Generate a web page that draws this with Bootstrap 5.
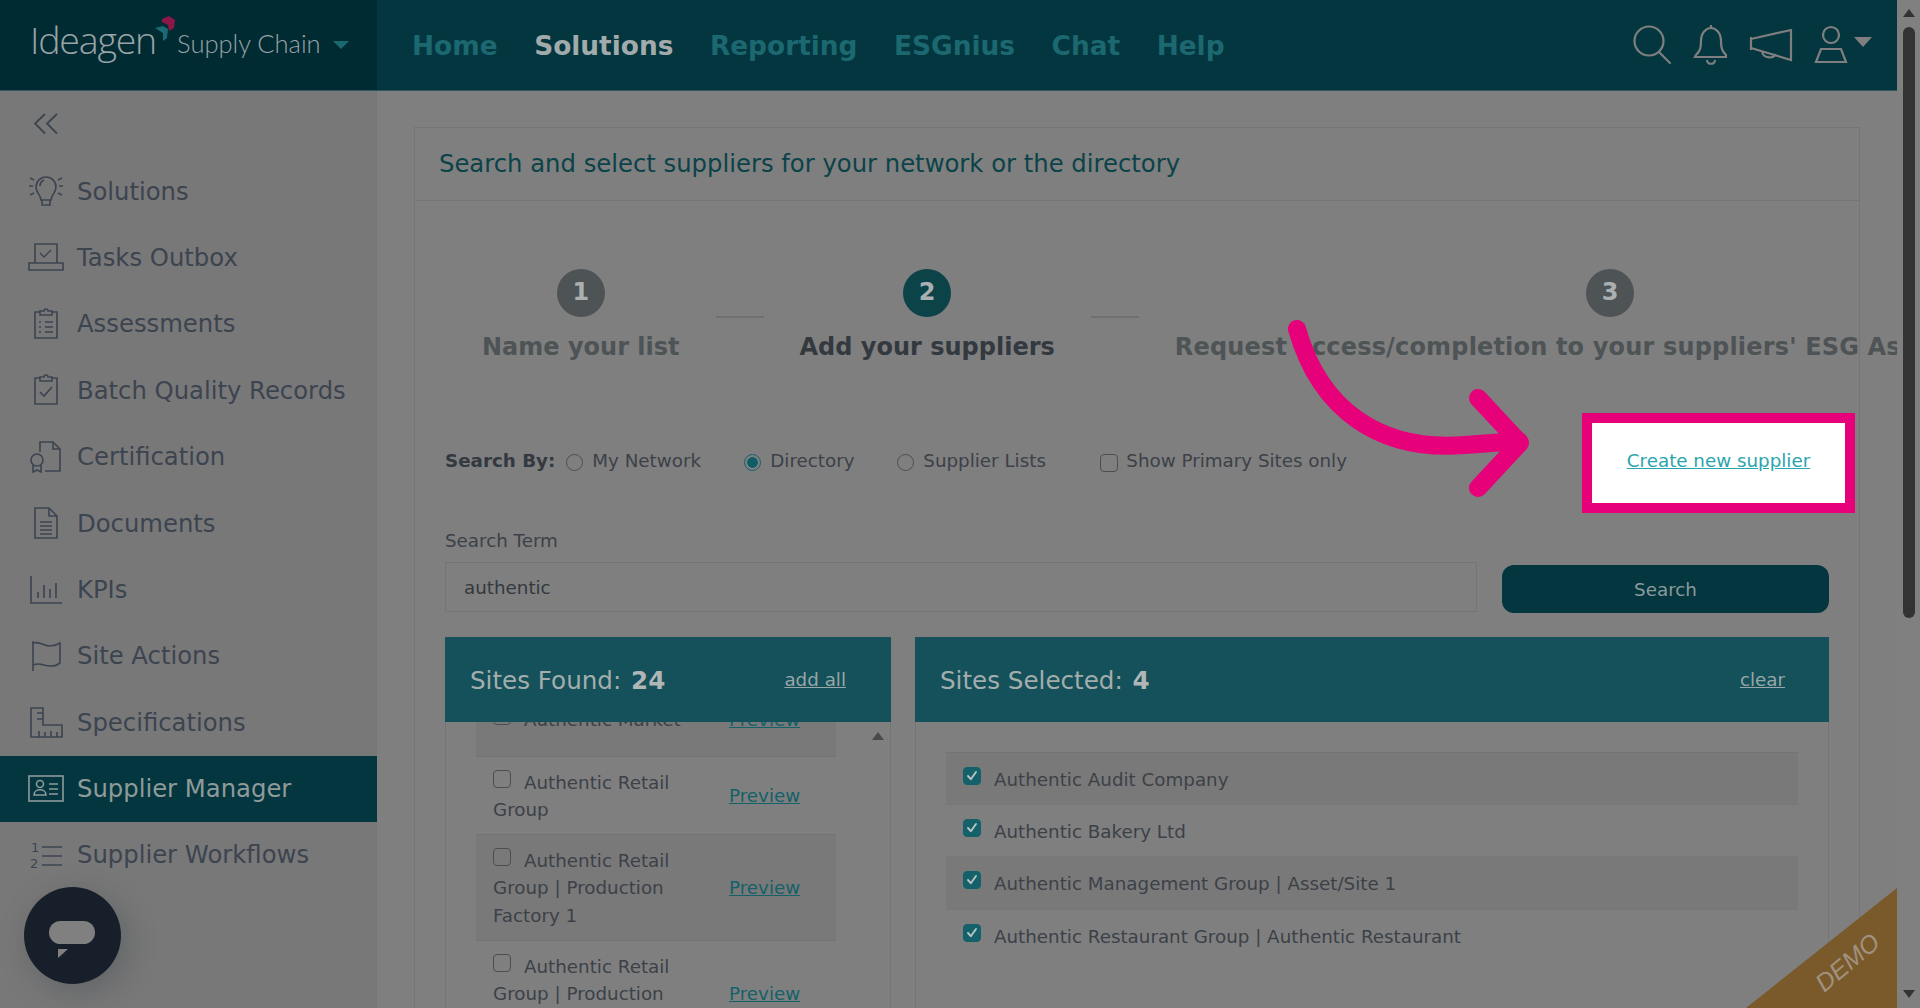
<!doctype html>
<html lang="en">
<head>
<meta charset="utf-8">
<title>Supplier Manager</title>
<link rel="stylesheet" href="https://cdn.jsdelivr.net/npm/bootstrap@5.3.0/dist/css/bootstrap.min.css">
<style>
html,body{height:100%;margin:0;overflow:hidden}
body{background:#7f7f7f;color:#3c4148;font-family:"DejaVu Sans",Verdana,sans-serif;font-size:18.3px;line-height:27.3px}
.scr-col{width:23px;flex:0 0 23px;background:#808080}
.scr-up,.scr-dn{width:0;height:0;border-left:6px solid transparent;border-right:6px solid transparent;margin:0 auto}
.scr-up{border-bottom:8px solid #333;margin-top:9px}
.scr-dn{border-top:8px solid #333;margin-top:auto;margin-bottom:10px}
.scr-thumb{width:12px;height:591px;background:#333;border-radius:6px;margin:10px auto 0}
.topbar{height:91px;background:#03363f;border-bottom:1px solid #2c5a60;padding:0;flex-wrap:nowrap;flex:0 0 91px}
.brandbox{width:377px;height:90px;background:#002b33;padding-left:30px;color:#9aa3a6;flex:0 0 377px}
.logo-word{font-family:"Open Sans",sans-serif;font-weight:300;font-size:37.5px;letter-spacing:-1.2px;line-height:1;margin-top:-11px}
.logo-sub{font-family:"Lato",sans-serif;font-weight:300;font-size:25.5px;line-height:1;margin-left:0;margin-top:-2px}
.brand-caret{width:0;height:0;border-left:8px solid transparent;border-right:8px solid transparent;border-top:8px solid #1b6870;margin:0 0 0 12px}
.topnav{gap:36.5px;padding-left:35px}
.topnav a{font-size:26.4px;font-weight:700;color:#1b6870;text-decoration:none;line-height:1.2;margin-top:2px}
.topnav a.on{color:#a2abab}
.top-ico{padding-right:25px;gap:0}
.side{width:377px;flex:0 0 377px;background:#787878}
.side-collapse{height:67px;padding:18px 0 0 34px}
.side-row{height:66.4px;padding-left:27px;gap:12px;color:#3c4450;font-size:24.3px;text-decoration:none}
.side-row.on{background:#03363f;color:#8f9a9a}
.side-row svg{flex:0 0 38px}
.pane{padding:36px 37px 0 37px;min-width:0}
.sheet{background:#7f7f7f;border:1px solid #757575;border-bottom:0;--bs-card-bg:#7f7f7f;--bs-card-border-radius:0;--bs-card-inner-border-radius:0;border-radius:0;height:1200px}
.sheet-head{height:73px;padding:0 24px;border-bottom:1px solid #757575;background:transparent;color:#0b4349;font-size:24.3px}
.sheet-body{padding:68px 30px 0 30px}
.stepper{margin-left:37px;gap:36px;white-space:nowrap}
.step-num{width:48px;height:48px;border-radius:50%;background:#4e5356;color:#aab0b2;font-weight:700;font-size:24px;margin:0 auto 15px}
.step-one.cur .step-num{background:#0b4349}
.step-lab{font-size:24px;font-weight:700;color:#4e5356;line-height:30px}
.step-lab.long-lab{letter-spacing:.17px}
.step-one.cur .step-lab{color:#33393f}
.step-bar{width:48px;height:2px;background:#6f7171;margin-top:47px;flex:0 0 48px}
.opts{margin-top:51px;height:100px;margin-right:-26px}
.opts b{color:#33393f;margin-right:11px;margin-top:-5px}
.opts label span{margin-top:-5px}
.form-check-input.tick{width:18px;height:18px;flex:none;background-color:transparent;border:1.5px solid #4a4e52;margin:0;border-radius:4px}
.form-check-input.rad{width:17px;height:17px;flex:none;background-color:transparent;border:1.5px solid #4a4e52;margin:0 9px 0 0}
.form-check-input.rad:checked{border-color:#14616a;background-color:transparent;background-image:radial-gradient(circle,#0e5d66 0 5px,transparent 5.6px)}
.form-check-input.tick:checked{background-color:#14616a;border-color:#14616a;background-image:url("data:image/svg+xml,%3csvg xmlns='http://www.w3.org/2000/svg' viewBox='0 0 20 20'%3e%3cpath fill='none' stroke='%23b9c4c4' stroke-linecap='round' stroke-linejoin='round' stroke-width='2.4' d='m5 10 3.5 4L15 5'/%3e%3c/svg%3e")}
.hl-box{width:273px;height:100px;border:10px solid #e6007a;background:#fff}
.hl-box a{color:#2aa5ae;text-decoration:underline;margin-top:-5px}
.term-lab{margin-top:14px;margin-bottom:8px;color:#3c4148}
.term-row{gap:25px}
.term-in{flex:0 0 1032px;width:1032px;height:50px;background:#7f7f7f;border:1px solid #757575;border-radius:0;color:#33393f;font-size:18.3px;padding:0 18px;font-family:inherit}
.term-in:focus{background:#7f7f7f;box-shadow:none;border-color:#757575;color:#33393f}
.go-btn{flex:1;height:48px;background:#03363f;border:0;border-radius:12px;color:#8a9a9a;font-size:18.3px;font-family:inherit;margin-bottom:-1px}
.panels{gap:24px;margin-top:25px}
.pan-l{flex:0 0 446px;width:446px}
.pan-r{flex:1;min-width:0}
.pan-h{height:85px;background:#14515a;color:#a4adad;font-size:24.6px;padding:0 25px}
.pan-h > span{margin-top:2px}
.pan-l .pan-h{padding-right:45px}
.pan-r .pan-h{padding-right:44px}
.pan-h b{font-weight:700;color:#b0b5b5;margin-left:2px}
.pan-h a{color:#97a6a6;font-size:18.3px;text-decoration:underline}
.pan-b{height:400px;border:solid #757575;border-width:0 1px;overflow:hidden;position:relative}
.list-l{margin:-28px 0 0 30px;width:360px}
.l-row{border-bottom:1px solid #747474;padding:12px 0 11px 17px}
.l-row:nth-child(odd){background:#797979}
.l-row.clip-row{padding-bottom:22px}
.l-name{flex:0 0 236px;width:236px;padding-right:30px}
.l-name .tick{vertical-align:top;margin:1px 13px 0 0!important}
.l-row a,.r-row a{color:#14616a}
.up-tri{position:absolute;right:6px;top:10px;width:0;height:0;border-left:6px solid transparent;border-right:6px solid transparent;border-bottom:8px solid #4a4a4a}
.list-r{padding:30px 30px 0 30px}
.r-row{padding:12.8px 17px;border-bottom:1px solid #777;gap:13px;height:52.6px}
.r-row:first-child{border-top:1px solid #747474}
.r-row:nth-child(odd){background:#797979}
.r-row:last-child{border-bottom:0}
.r-row .tick{margin-top:1px!important}
.ovr{position:absolute;pointer-events:none}
.arrow-ovr{left:0;top:0}
.demo-ovr{right:0;bottom:0;width:151px;height:120px;background:#7a5a2a;clip-path:polygon(100% 0,100% 100%,0 100%)}
.demo-t{position:absolute;right:12px;bottom:33px;transform:rotate(-40deg);font-family:"Liberation Sans",sans-serif;font-style:italic;font-size:25px;line-height:1;color:#a09180}
.chat-fab{left:24px;top:887px;width:97px;height:97px;border-radius:50%;background:#17202a;box-shadow:6px 8px 30px rgba(30,40,50,.25)}
</style>
</head>
<body>
<div class="d-flex h-100">
<div class="flex-grow-1 d-flex flex-column position-relative overflow-hidden" style="min-width:0">
  <nav class="navbar topbar d-flex align-items-stretch justify-content-start">
    <div class="brandbox d-flex align-items-center position-relative">
      <span class="logo-word">Ideagen</span>
      <svg width="24" height="34" viewBox="0 0 24 34" class="flex-shrink-0" style="margin:-28px 0 0 -3px"><path d="M9 5l7-3 6 4-1 8-5 3-1-6-6-3z" fill="#8a1748"/><path d="M2 14l8-2 5 3-1 9-4 3V19z" fill="#1a6a74"/></svg>
      <span class="logo-sub">Supply Chain</span>
      <span class="brand-caret"></span>
    </div>
    <div class="topnav d-flex align-items-center flex-grow-1">
      <a href="#">Home</a><a href="#" class="on">Solutions</a><a href="#">Reporting</a><a href="#">ESGnius</a><a href="#">Chat</a><a href="#">Help</a>
    </div>
    <div class="top-ico d-flex align-items-center">
      <svg width="40" height="40" viewBox="0 0 40 40" fill="none" stroke="#7f7f7f" stroke-width="2.2" style="margin-right:21px"><circle cx="17" cy="16" r="14.5"/><path d="M27 27l11 11" stroke-linecap="round"/></svg>
      <svg width="36" height="42" viewBox="0 0 36 42" fill="none" stroke="#7f7f7f" stroke-width="2.2" style="margin-right:20px"><path d="M18 1v3M3 31c4-4 5-7 5-14 0-8 5-13 10-13s10 5 10 13c0 7 1 10 5 14v2H2zM14 36c0 5 8 5 8 0"/></svg>
      <svg width="44" height="34" viewBox="0 0 44 34" fill="none" stroke="#7f7f7f" stroke-width="2.2" style="margin-right:21px"><path d="M2 9v13M2 11l40-9v30L2 20zM13 23c0 8 14 8 13 3"/></svg>
      <svg width="34" height="40" viewBox="0 0 34 40" fill="none" stroke="#7f7f7f" stroke-width="2.2" style="margin-right:6px"><circle cx="17" cy="10" r="8"/><path d="M7 24h20l5 13H2z"/></svg>
      <svg width="18" height="10" viewBox="0 0 18 10" style="margin-top:-6px"><path d="M0 0h18L9 10z" fill="#7f7f7f"/></svg>
    </div>
  </nav>
  <div class="d-flex flex-grow-1" style="min-height:0">
    <aside class="side d-flex flex-column">
      <div class="side-collapse"><svg width="24" height="22" viewBox="0 0 24 22" fill="none" stroke="#3c4450" stroke-width="1.8"><path d="M11 1L1 10.500l10 10M23 1L13 10.500l10 10"/></svg></div>
      <a href="#" class="side-row d-flex align-items-center"><svg width="38" height="38" viewBox="0 0 38 38" fill="none" stroke="#3c4450" stroke-width="1.600"><path d="M14 28c0-5-5-7-5-13a10 10 0 0 1 20 0c0 6-5 8-5 13zM15 28v5h8v-5M13 14c0-3 2-5 4-6"/><path d="M2 14h4M32 14h4M3 6l4 2M35 6l-4 2M3 23l4-2M35 23l-4-2" stroke-width="1.400"/></svg><span>Solutions</span></a>
      <a href="#" class="side-row d-flex align-items-center"><svg width="38" height="38" viewBox="0 0 38 38" fill="none" stroke="#3c4450" stroke-width="1.600"><path d="M8 24V5h22v19M2 24h34v7H2zM2 31v-7"/><path d="M13 14l4 4 7-7" stroke-width="1.400"/></svg><span>Tasks Outbox</span></a>
      <a href="#" class="side-row d-flex align-items-center"><svg width="38" height="38" viewBox="0 0 38 38" fill="none" stroke="#3c4450" stroke-width="1.600"><path d="M13 7H8v26h22V7h-5M13 10V6h4a2 2 0 0 1 4 0h4v4z"/><path d="M12 17h2M18 17h8M12 22h2M18 22h8M12 27h2M18 27h8"/></svg><span>Assessments</span></a>
      <a href="#" class="side-row d-flex align-items-center"><svg width="38" height="38" viewBox="0 0 38 38" fill="none" stroke="#3c4450" stroke-width="1.600"><path d="M13 7H8v26h22V7h-5M13 10V6h4a2 2 0 0 1 4 0h4v4z"/><path d="M13 21l4 4 8-9"/></svg><span>Batch Quality Records</span></a>
      <a href="#" class="side-row d-flex align-items-center"><svg width="38" height="38" viewBox="0 0 38 38" fill="none" stroke="#3c4450" stroke-width="1.600"><path d="M13 14V4h13l7 7v22H18M26 4v7h7"/><circle cx="10" cy="22" r="6"/><path d="M6 27v7l4-2 4 2v-7"/></svg><span>Certification</span></a>
      <a href="#" class="side-row d-flex align-items-center"><svg width="38" height="38" viewBox="0 0 38 38" fill="none" stroke="#3c4450" stroke-width="1.600"><path d="M8 4h14l8 8v22H8zM22 4v8h8M13 18h12M13 22h12M13 26h12M13 30h12"/></svg><span>Documents</span></a>
      <a href="#" class="side-row d-flex align-items-center"><svg width="38" height="38" viewBox="0 0 38 38" fill="none" stroke="#3c4450" stroke-width="1.600"><path d="M4 5v27h31M11 27v-6M17 27V14M23 27v-9M29 27V12"/></svg><span>KPIs</span></a>
      <a href="#" class="side-row d-flex align-items-center"><svg width="38" height="38" viewBox="0 0 38 38" fill="none" stroke="#3c4450" stroke-width="1.600"><path d="M6 4v30M6 6c8-2 10 3 17 3 4 0 7-1 10-3v20c-4 3-6 3-10 3-6 0-10-4-17-1"/></svg><span>Site Actions</span></a>
      <a href="#" class="side-row d-flex align-items-center"><svg width="38" height="38" viewBox="0 0 38 38" fill="none" stroke="#3c4450" stroke-width="1.600"><path d="M4 5h12v17h19v12H4zM10 10h6M10 16h6M12 34v-6M18 34v-5M24 34v-6M30 34v-5"/></svg><span>Specifications</span></a>
      <a href="#" class="side-row on d-flex align-items-center"><svg width="38" height="38" viewBox="0 0 38 38" fill="none" stroke="#8f9a9a" stroke-width="1.600"><rect x="2" y="6" width="34" height="25"/><circle cx="13" cy="14" r="3.500"/><path d="M7 25c0-7 12-7 12 0zM22 14h9M22 19h9M22 24h9"/></svg><span>Supplier Manager</span></a>
      <a href="#" class="side-row d-flex align-items-center"><svg width="38" height="38" viewBox="0 0 38 38" fill="none" stroke="#3c4450" stroke-width="1.600"><path d="M15 11h20M15 20h20M15 29h20"/><text x="4" y="16" font-size="13" fill="#3c4450" stroke="none" font-family="DejaVu Sans">1</text><text x="3" y="32" font-size="13" fill="#3c4450" stroke="none" font-family="DejaVu Sans">2</text></svg><span>Supplier Workflows</span></a>
    </aside>
    <main class="pane flex-grow-1 overflow-hidden">
      <div class="card sheet">
        <div class="card-header sheet-head d-flex align-items-center">Search and select suppliers for your network or the directory</div>
        <div class="sheet-body">
          <div class="stepper d-flex align-items-start">
            <div class="step-one text-center"><div class="step-num d-flex align-items-center justify-content-center">1</div><div class="step-lab">Name your list</div></div>
            <div class="step-bar"></div>
            <div class="step-one cur text-center"><div class="step-num d-flex align-items-center justify-content-center">2</div><div class="step-lab">Add your suppliers</div></div>
            <div class="step-bar"></div>
            <div class="step-one text-center"><div class="step-num d-flex align-items-center justify-content-center">3</div><div class="step-lab long-lab">Request access/completion to your suppliers' ESG Assessments</div></div>
          </div>
          <div class="opts d-flex align-items-center">
            <b>Search By:</b>
            <label class="d-flex align-items-center" style="width:178px"><input class="form-check-input rad" type="radio" name="sb"><span>My Network</span></label>
            <label class="d-flex align-items-center" style="width:153px"><input class="form-check-input rad" type="radio" name="sb" checked><span>Directory</span></label>
            <label class="d-flex align-items-center" style="width:203px"><input class="form-check-input rad" type="radio" name="sb"><span>Supplier Lists</span></label>
            <label class="d-flex align-items-center gap-2"><input class="form-check-input tick" type="checkbox"><span>Show Primary Sites only</span></label>
            <div class="hl-box ms-auto d-flex align-items-center justify-content-center"><a href="#">Create new supplier</a></div>
          </div>
          <div class="term-lab">Search Term</div>
          <div class="term-row d-flex align-items-end">
            <input class="form-control term-in" type="text" value="authentic">
            <button class="btn go-btn" type="button">Search</button>
          </div>
          <div class="panels d-flex">
            <section class="pan-l">
              <div class="pan-h d-flex align-items-center justify-content-between"><span>Sites Found: <b>24</b></span><a href="#">add all</a></div>
              <div class="pan-b">
                <div class="list-l">
                  <div class="l-row clip-row d-flex align-items-start"><div class="l-name"><input class="form-check-input tick" type="checkbox">Authentic Market</div><a href="#">Preview</a></div>
                  <div class="l-row d-flex align-items-center"><div class="l-name"><input class="form-check-input tick" type="checkbox">Authentic Retail Group</div><a href="#">Preview</a></div>
                  <div class="l-row d-flex align-items-center"><div class="l-name"><input class="form-check-input tick" type="checkbox">Authentic Retail Group | Production Factory 1</div><a href="#">Preview</a></div>
                  <div class="l-row d-flex align-items-center"><div class="l-name"><input class="form-check-input tick" type="checkbox">Authentic Retail Group | Production Factory 2</div><a href="#">Preview</a></div>
                </div>
                <span class="up-tri"></span>
              </div>
            </section>
            <section class="pan-r">
              <div class="pan-h d-flex align-items-center justify-content-between"><span>Sites Selected: <b>4</b></span><a href="#">clear</a></div>
              <div class="pan-b list-r">
                <div class="r-row d-flex align-items-start"><input class="form-check-input tick" type="checkbox" checked><span>Authentic Audit Company</span></div>
                <div class="r-row d-flex align-items-start"><input class="form-check-input tick" type="checkbox" checked><span>Authentic Bakery Ltd</span></div>
                <div class="r-row d-flex align-items-start"><input class="form-check-input tick" type="checkbox" checked><span>Authentic Management Group | Asset/Site 1</span></div>
                <div class="r-row d-flex align-items-start"><input class="form-check-input tick" type="checkbox" checked><span>Authentic Restaurant Group | Authentic Restaurant</span></div>
              </div>
            </section>
          </div>
        </div>
      </div>
    </main>
  </div>
  <svg class="ovr arrow-ovr" width="1897" height="1008" viewBox="0 0 1897 1008" fill="none" stroke="#e6007a" stroke-width="18" stroke-linecap="round" stroke-linejoin="round"><path d="M1297 329C1320 410 1380 452 1465 445L1519 441"/><path d="M1478 398l42 45-42 45"/></svg>
  <div class="ovr demo-ovr"><span class="demo-t">DEMO</span></div>
  <div class="ovr chat-fab"><svg width="97" height="97" viewBox="0 0 97 97"><rect x="25" y="34" width="46" height="23" rx="11.500" fill="#808080"/><path d="M34 71v-9h10z" fill="#808080"/></svg></div>
</div>
<div class="scr-col d-flex flex-column">
  <div class="scr-up"></div>
  <div class="scr-thumb"></div>
  <div class="scr-dn"></div>
</div>
</div>
</body>
</html>
